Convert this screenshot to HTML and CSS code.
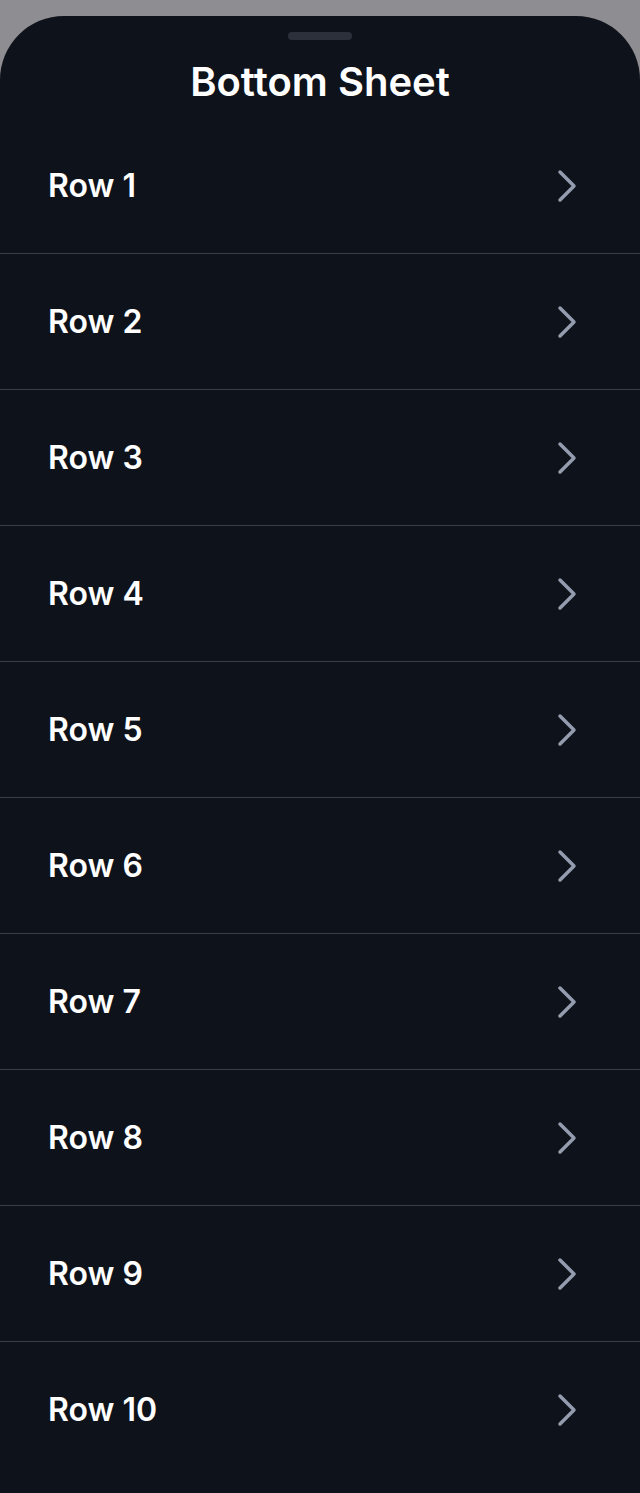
FILE: index.html
```html
<!DOCTYPE html>
<html lang="en">
<head>
<meta charset="utf-8">
<title>Bottom Sheet</title>
<link rel="stylesheet" href="styles.css">
</head>
<body>
<div class="sheet">
  <div class="header">
    <div class="handle"></div>
    <h1 class="title">Bottom Sheet</h1>
  </div>
  <ul class="list">
    <li class="row"><span class="label">Row 1</span><svg class="chev" width="20" height="34" viewBox="0 0 20 34"><polyline points="3,3 17,17 3,31"/></svg></li>
    <li class="row"><span class="label">Row 2</span><svg class="chev" width="20" height="34" viewBox="0 0 20 34"><polyline points="3,3 17,17 3,31"/></svg></li>
    <li class="row"><span class="label">Row 3</span><svg class="chev" width="20" height="34" viewBox="0 0 20 34"><polyline points="3,3 17,17 3,31"/></svg></li>
    <li class="row"><span class="label">Row 4</span><svg class="chev" width="20" height="34" viewBox="0 0 20 34"><polyline points="3,3 17,17 3,31"/></svg></li>
    <li class="row"><span class="label">Row 5</span><svg class="chev" width="20" height="34" viewBox="0 0 20 34"><polyline points="3,3 17,17 3,31"/></svg></li>
    <li class="row"><span class="label">Row 6</span><svg class="chev" width="20" height="34" viewBox="0 0 20 34"><polyline points="3,3 17,17 3,31"/></svg></li>
    <li class="row"><span class="label">Row 7</span><svg class="chev" width="20" height="34" viewBox="0 0 20 34"><polyline points="3,3 17,17 3,31"/></svg></li>
    <li class="row"><span class="label">Row 8</span><svg class="chev" width="20" height="34" viewBox="0 0 20 34"><polyline points="3,3 17,17 3,31"/></svg></li>
    <li class="row"><span class="label">Row 9</span><svg class="chev" width="20" height="34" viewBox="0 0 20 34"><polyline points="3,3 17,17 3,31"/></svg></li>
    <li class="row"><span class="label">Row 10</span><svg class="chev" width="20" height="34" viewBox="0 0 20 34"><polyline points="3,3 17,17 3,31"/></svg></li>
  </ul>
</div>
</body>
</html>
```
FILE: styles.css
```css
* { box-sizing: border-box; }
html, body {
  margin: 0;
  padding: 0;
  background: #8e8d92;
  font-family: Inter, "Noto Sans", sans-serif;
}
.sheet {
  margin-top: 16px;
  min-height: 1477px;
  background: #0e121b;
  border-radius: 64px 64px 0 0;
  color: #ffffff;
  padding-bottom: 16px;
}
.header {
  display: flex;
  flex-direction: column;
  align-items: center;
  padding-top: 16px;
  height: 102px;
}
.handle {
  width: 64px;
  height: 8px;
  border-radius: 4px;
  background: #2b303b;
}
.title {
  margin: 18px 0 0 0;
  font-size: 40px;
  line-height: 48px;
  font-weight: 600;
  letter-spacing: 0;
}
.list {
  list-style: none;
  margin: 0;
  padding: 0;
}
.row {
  display: flex;
  align-items: center;
  justify-content: space-between;
  height: 135px;
  padding: 0 63px 0 48px;
}
.row + .row {
  height: 136px;
  border-top: 1px solid #3a3e47;
}
.label {
  font-size: 32px;
  font-weight: 600;
}
.chev {
  display: block;
  fill: none;
  stroke: #939dae;
  stroke-width: 3.5;
  stroke-linecap: round;
  stroke-linejoin: round;
}
```
